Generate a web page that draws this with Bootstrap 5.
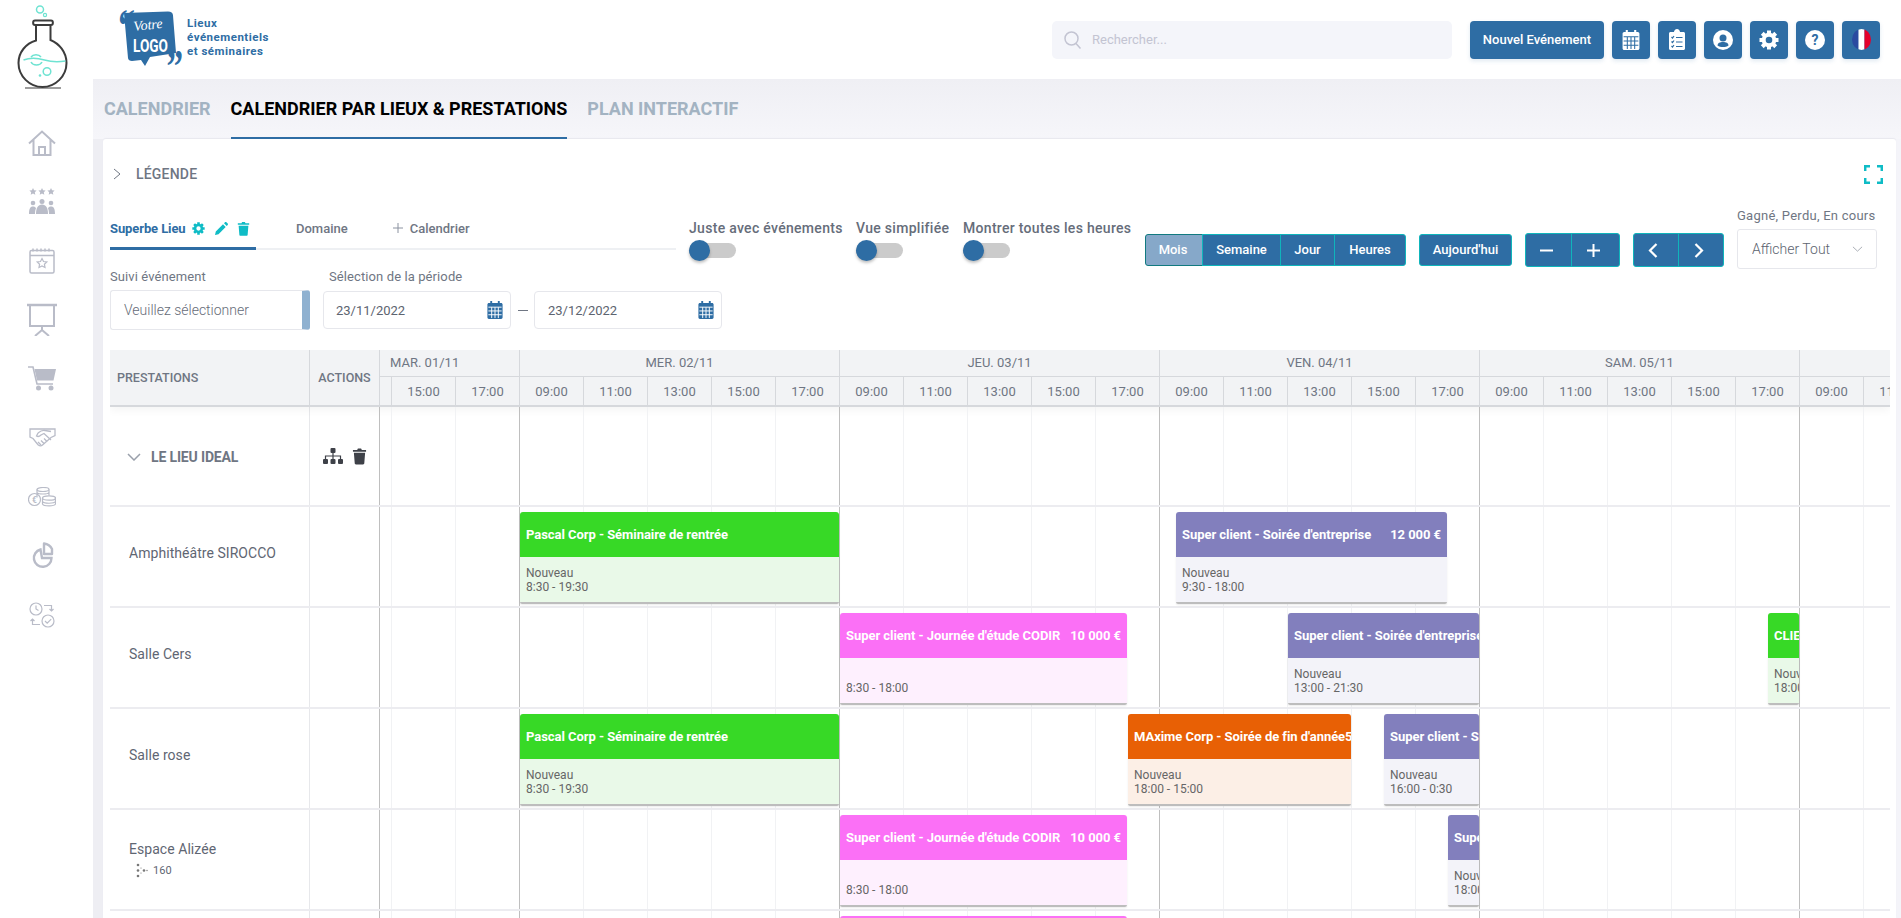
<!DOCTYPE html>
<html lang="fr">
<head>
  <meta charset="UTF-8" />
  <title>Calendrier par lieux</title>
  <link href="https://cdn.jsdelivr.net/npm/bootstrap@5.3.0/dist/css/bootstrap.min.css" rel="stylesheet"/>
  <style>
    html, body { height: 918px; overflow: hidden; }
    body { font-family: Roboto, "Liberation Sans", sans-serif; background: #f4f4f9; color: #6f7683; font-size: 13px; }
    .side-rail { flex: 0 0 93px; height: 918px; background: #fff; }
    .flask-box { height: 113px; padding-left: 2px; }
    .rail-item { height: 59px; width: 100%; color: #b9bcc8; padding-right: 9px; }
    .strip { flex: 0 0 10px; background: #eeeef3; }
    .cal-grid { stroke: var(--grid, #fff); }
    .cal-dark { --grid: #2e6da4; }

    .top-head { height: 79px; background: #fff; padding: 0 21px 0 7px; margin-left: -10px; position: relative; }
    .brand-text { color: #2e6da4; font-weight: 700; font-size: 11.5px; line-height: 14px; letter-spacing: .5px; margin: -6px 0 0 -9px; }
    .search-box { width: 400px; position: relative; margin-right: 18px; }
    .search-box input { height: 38px; background: #f4f5fa; border: 0; border-radius: 5px; padding-left: 40px; font-size: 13px; }
    .search-box input::placeholder { color: #c3c4d2; }
    .search-box svg { position: absolute; left: 12px; top: 10px; color: #c3c4d2; }
    .head-btn { height: 38px; background: #2e6da4; border: 0; border-radius: 4px; color: #fff; font-size: 13px; font-weight: 500; padding: 0; box-shadow: 0 2px 4px rgba(46,109,164,.15); }
    .head-btn.wide { width: 134px; }
    .head-btn.square { width: 38px; }
    .head-gap { gap: 8px; }

    .tab-bar { height: 60px; padding-left: 1px; background: linear-gradient(#efeff4, #f6f6fa); margin-left: -10px; gap: 20px; }
    .tab-link { font-size: 18px; font-weight: 700; color: #a3b3c2; height: 60px; line-height: 59px; text-transform: uppercase; padding: 0; margin: 0; }
    .tab-link:first-child { margin-left: 10px; }
    .tab-link.on { color: #000; border-bottom: 2px solid #2e6da4; }

    .sheet { background: #fff; margin-right: 5px; padding: 0 6px 0 7px; height: 779px; border-radius: 3px 3px 0 0; box-shadow: 0 -1px 1px #e8e8ee; overflow: hidden; }
    .legend-row { height: 70px; padding-right: 7px; }
    .legend-row span { font-size: 14px; font-weight: 500; margin-left: 15px; letter-spacing: .2px; }
    .legend-row .chev { margin-left: 3px; }
    .teal { color: #0fbcc6; }

    .tools-row { height: 60px; }
    .place-tabs { width: 566px; height: 30px; margin-top: 11px; margin-right: 13px; border-bottom: 2px solid #eef0f3; }
    .place-tab { height: 28px; line-height: 17px; padding: 0; font-size: 13px; font-weight: 500; color: #6f7683; }
    .place-tab.on { width: 146px; height: 30px; border-bottom: 3px solid #2e6da4; color: #2e6da4; font-weight: 700; letter-spacing: -.1px; white-space: nowrap; gap: 7px; }
    .switch-box { margin-top: 11px; }
    .sw-a { width: 167px; } .sw-b { width: 107px; } .sw-c { width: 182px; }
    .switch-box label { font-size: 14px; font-weight: 500; display: block; line-height: 17px; margin-bottom: 4px; letter-spacing: .3px; color: #666d7a; white-space: nowrap; }
    .switch-track { width: 47px; height: 15px; border-radius: 8px; background: #cbcbcb; position: relative; margin-top: 6px; }
    .switch-track::before { content: ""; position: absolute; left: 0; top: -3px; width: 21px; height: 21px; border-radius: 50%; background: #2e6da4; box-shadow: 0 2px 3px rgba(0,0,0,.25); }
    .plan-btn { background: #2e6da4; color: #fff; border: 1px solid #0fb5bb; font-size: 13px; font-weight: 500; height: 32px; padding: 0; box-shadow: none; border-radius: 3px; }
    .plan-btn:hover { background: #2e6da4; color: #fff; }
    .plan-btn.dim { background: #86a8c9; border-color: #117a80; }
    .tall .plan-btn { height: 34px; }
    .w-mois { width: 58px; padding-right: 2px; } .w-sem { width: 79px; } .w-jour { width: 55px; } .w-heures { width: 72px; }
    .w-today { width: 93px; margin: 25px 0 0 13px; }
    .w-minus { width: 47px; padding-right: 4px; } .w-plus { width: 49px; padding-right: 4px; }
    .w-prev { width: 46px; padding-right: 6px; } .w-next { width: 46px; padding-right: 4px; }
    .views-group { margin-top: 25px; }
    .step-group { margin: 24px 0 0 13px; }
    .status-box { width: 140px; margin-left: 13px; }
    .status-box div { font-size: 13px; line-height: 15px; letter-spacing: .25px; white-space: nowrap; margin-top: -1px; margin-bottom: 6px; }
    .status-box select { height: 40px; width: 140px; border: 1px solid #e6e7ec; border-radius: 3px; font-size: 14px; font-weight: 300; color: #5d6470; padding-left: 14px; background-size: 11px; background-position: right 13px center;
      background-image: url("data:image/svg+xml,%3csvg xmlns='http://www.w3.org/2000/svg' viewBox='0 0 12 7'%3e%3cpath fill='none' stroke='%23a0a4ad' d='M1 1l5 5 5-5'/%3e%3c/svg%3e"); }
    .field-label { font-size: 13px; line-height: 15px; margin-bottom: 6px; letter-spacing: .1px; }
    .track-select { width: 200px; height: 40px; border: 1px solid #e6e7ec; border-right: 8px solid #8fb1d0; border-radius: 3px; padding-left: 13px; font-size: 14px; font-weight: 300; line-height: 38px; color: #666c78; }
    .period-box { margin-left: 13px; }
    .period-box .field-label { margin: 1px 0 7px 6px; }
    .date-box { width: 188px; height: 38px; position: relative; }
    .date-box input { height: 38px; border: 1px solid #e6e7ec; border-radius: 4px; padding-left: 12px; font-size: 13px; color: #5d6470; }
    .date-box + .date-dash + .date-box input { padding-left: 13px; }
    .date-box svg { position: absolute; right: 8px; top: 10px; color: #2e6da4; }
    .date-dash { width: 10px; height: 1px; background: #6f7683; margin: 0 6.5px; }
    .fields-row { height: 82px; margin-top: -1px; }
    .suivi-label { margin-top: 1px; }

    .plan { width: 1780px; overflow: hidden; }
    .plan-head { height: 57px; background: #f2f3f5; border-bottom: 2px solid #d6d8dc; box-shadow: 0 4px 8px rgba(0,0,0,.04); position: relative; }
    .col-name { flex: 0 0 200px; border-right: 1px solid #e7e8eb; }
    .col-acts { flex: 0 0 70px; border-right: 1px solid #e7e8eb; }
    .plan-head .col-name, .plan-head .col-acts { border-right-color: #d6d8dc; font-weight: 500; font-size: 12.5px; line-height: 55px; }
    .plan-head .col-name { padding-left: 7px; }
    .plan-head .col-acts { text-align: center; }
    .head-track { flex: 0 0 auto; width: 1510px; overflow: hidden; }
    .day-line, .hour-line { display: flex; width: 1800px; }
    .day-line { height: 27px; border-bottom: 1px solid #d6d8dc; }
    .day-cell { flex: 0 0 320px; text-align: center; line-height: 26px; border-right: 1px solid #d6d8dc; font-size: 13px; }
    .day-cell.first { flex-basis: 140px; text-align: left; padding-left: 10px; }
    .hour-cell { flex: 0 0 64px; text-align: center; line-height: 30px; border-right: 1px solid #d6d8dc; font-size: 13px; height: 28px; }
    .hour-cell.stub { flex-basis: 12px; }

    .plan-row { height: 101px; border-bottom: 2px solid #ececf0; }
    .plan-row.group { height: 100px; }
    .plan-row .col-name { color: #5f6673; font-size: 14px; padding-left: 19px; padding-top: 36px; letter-spacing: .05px; }
    .plan-row.group .col-name { padding: 2px 0 0 17px; display: flex; align-items: center; font-weight: 700; font-size: 14px; letter-spacing: -.15px; color: #6f7683; gap: 10px; }
    .plan-row.group .col-acts { display: flex; align-items: center; justify-content: center; gap: 9px; color: #3e4148; padding-bottom: 1px; }
    .seat-line { font-size: 11px; line-height: 13px; margin: 3px 0 0 6px; display: flex; align-items: center; gap: 5px; }
    .plan-row.tight .col-name { padding-top: 29px; }
    .row-track { flex: 0 0 1511px; position: relative; border-left: 1px solid #bfbfbf;
      background-image: linear-gradient(to right, #bfbfbf 1px, transparent 1px), linear-gradient(to right, #f1f2f4 1px, transparent 1px);
      background-size: 320px 100%, 64px 100%;
      background-position: 139px 0, 11px 0; margin-left: -1px; }
    .slot { position: absolute; top: 5px; height: 92px; border-radius: 3px 3px 2px 2px; overflow: hidden; border-bottom: 2px solid #bdbdbd; box-shadow: 0 1px 2px rgba(0,0,0,.08); }
    .slot-top { height: 45px; display: flex; align-items: center; justify-content: space-between; padding: 0 6px; color: #fff; font-weight: 700; font-size: 13px; white-space: nowrap; letter-spacing: -.05px; }
    .slot-top span { flex: none; }
    .slot-body { height: 45px; padding: 9px 6px 0; font-size: 12px; line-height: 14px; color: #666; white-space: nowrap; }
    .tone-green .slot-top { background: #37d926; } .tone-green .slot-body { background: #e9f9e8; }
    .tone-violet .slot-top { background: #827fbd; } .tone-violet .slot-body { background: #f3f3f9; }
    .tone-pink .slot-top { background: #fb70f6; } .tone-pink .slot-body { background: #fef0fe; }
    .tone-orange .slot-top { background: #e86005; } .tone-orange .slot-body { background: #fcefe6; }
    .logo-box { margin: 3px 0 0 16px; overflow: visible; }
    .tab-gear { margin: 2px 0 0 -1px; }
    .tab-pen { margin: 2px 0 0 3px; }
    .tab-bin { margin: 1px 0 0 2px; }
    .tab-domain { margin-left: 40px; }
    .tab-add { margin-left: 45px; }
    .tab-add svg { margin: 3px 7px 0 0; }
  </style>
</head>
<body class="d-flex">
  <svg class="d-none" xmlns="http://www.w3.org/2000/svg">
    <symbol id="i-gear" viewBox="0 0 20 20">
      <g fill="currentColor">
        <path d="M8 .5h4v4H8zM8 15.500h4v4H8z"/>
        <path d="M8 .5h4v4H8zM8 15.500h4v4H8z" transform="rotate(45 10 10)"/>
        <path d="M8 .5h4v4H8zM8 15.500h4v4H8z" transform="rotate(90 10 10)"/>
        <path d="M8 .5h4v4H8zM8 15.500h4v4H8z" transform="rotate(135 10 10)"/>
      </g>
      <circle cx="10" cy="10" r="5.300" fill="none" stroke="currentColor" stroke-width="4"/>
    </symbol>
    <symbol id="i-trash" viewBox="0 0 16 18">
      <path fill="currentColor" d="M1 2.500h4.500L6.300 1h3.400l.8 1.500H15v2H1zM2 5.500h12l-.9 11.200c0 .7-.6 1.300-1.300 1.300H4.200c-.7 0-1.300-.6-1.300-1.300z"/>
    </symbol>
    <symbol id="i-cal" viewBox="0 0 16 19">
      <path fill="currentColor" d="M3 0h2v3H3zM11 0h2v3h-2zM1.500 2h13c.8 0 1.500.7 1.500 1.500v14c0 .8-.7 1.500-1.500 1.500h-13C.7 19 0 18.300 0 17.500v-14C0 2.700.7 2 1.500 2z"/>
      <path class="cal-grid" stroke-width="1" fill="none" d="M1 6.500h14M1 10.500h14M1 14.500h14M4.500 6.500V18M8 6.500V18M11.500 6.500V18"/>
    </symbol>
  </svg>

  <aside class="side-rail d-flex flex-column align-items-center">
    <div class="flask-box">
      <svg width="75" height="100" viewBox="0 0 75 100" fill="none">
        <circle cx="30" cy="9.500" r="3.500" stroke="#6fe3d2" stroke-width="1.500"/>
        <circle cx="35" cy="15" r="1.600" stroke="#6fe3d2" stroke-width="1.200"/>
        <path stroke="#3c3c3c" stroke-width="2" d="M25 20.500h16c2.500 0 2.500 4.500 0 4.500H25c-2.500 0-2.500-4.500 0-4.500zM26 25v15.500C16 43.500 8.500 52 8.500 63c0 13 11 24 24 24s24-11 24-24c0-11-7.500-19.500-16-23V25"/>
        <path stroke="#3c3c3c" stroke-width="1.200" d="M15 88h36"/>
        <path stroke="#6fe3d2" stroke-width="1.500" d="M13.500 60c8-3 14-2 21 0s14 2 21 1M21 57c2-3 8-3 10 0M21 62c2 4 9 4 11 0"/>
        <circle cx="37" cy="71.500" r="3.800" stroke="#6fe3d2" stroke-width="1.500"/>
        <circle cx="30" cy="75.500" r="1.300" fill="#6fe3d2"/>
      </svg>
    </div>
    <div class="rail-item d-flex align-items-center justify-content-center">
      <svg width="28" height="26" viewBox="0 0 28 26" fill="none" stroke="currentColor" stroke-width="2"><path d="M1 13.500 14 1.500l13 12M5.500 10v15h17V10M11 25v-8h6v8"/></svg>
    </div>
    <div class="rail-item d-flex align-items-center justify-content-center">
      <svg width="26" height="27" viewBox="0 0 26 27" fill="currentColor">
        <path d="M4 0l1.100 2.300 2.500.3-1.800 1.700.5 2.500L4 5.600 1.700 6.800l.5-2.500L.4 2.600l2.500-.3z"/>
        <path d="M13 0l1.100 2.300 2.500.3-1.800 1.700.5 2.500L13 5.600l-2.300 1.200.5-2.500-1.800-1.700 2.500-.3zM22 0l1.100 2.300 2.500.3-1.800 1.700.5 2.500L22 5.600l-2.300 1.200.5-2.500-1.800-1.700 2.500-.3z"/>
        <circle cx="4" cy="15" r="2.300"/><circle cx="13" cy="13.500" r="2.500"/><circle cx="22" cy="15" r="2.300"/>
        <path d="M0 26c0-5 1-7.500 4-7.500 1.500 0 2.500.7 3 1.700-.7 1.500-1 3.500-1 5.800zM7 26c0-6 2-9.500 6-9.500s6 3.500 6 9.500zM20 26c0-2.300-.3-4.300-1-5.800.5-1 1.500-1.700 3-1.700 3 0 4 2.500 4 7.500z"/>
      </svg>
    </div>
    <div class="rail-item d-flex align-items-center justify-content-center">
      <svg width="26" height="26" viewBox="0 0 26 26" fill="none" stroke="currentColor" stroke-width="1.500"><rect x="1" y="2.500" width="24" height="22.500" rx="1.500"/><path d="M1 7.500h24M4 .5v3M8 .5v3M12 .5v3M16 .5v3M20 .5v3"/><path stroke-width="1.200" d="M13 10.500l1.500 3 3.300.4-2.400 2.300.6 3.300-3-1.600-3 1.600.6-3.300-2.400-2.300 3.300-.4z"/></svg>
    </div>
    <div class="rail-item d-flex align-items-center justify-content-center">
      <svg width="30" height="33" viewBox="0 0 30 33" fill="none" stroke="currentColor" stroke-width="2"><path stroke-width="2.500" d="M0 2h30"/><path d="M3 3v20h24V3M15 23v4M15 27l-7 6M15 27l7 6"/></svg>
    </div>
    <div class="rail-item d-flex align-items-center justify-content-center">
      <svg width="28" height="25" viewBox="0 0 28 25" fill="currentColor"><path fill="none" stroke="currentColor" stroke-width="1.600" d="M0 1h5l4 17h16"/><path d="M6.500 3H28l-2.500 11.500H9z"/><circle cx="10.500" cy="22" r="2.500"/><circle cx="23" cy="22" r="2.500"/></svg>
    </div>
    <div class="rail-item d-flex align-items-center justify-content-center">
      <svg width="27" height="19" viewBox="0 0 27 19" fill="none" stroke="currentColor" stroke-width="1.300"><path d="M1 1h25v6.500l-4 2-8.500 7.500c-1.500 1.300-3 1-4.500-.3L4 10.500l-3-1.500z"/><path d="M9 5c3-2.500 5-3 7-2.500l6 1M9 5l-1.500 3c1.500 1 3 .5 4.500-1l3-1.500 7 6.500M12 17l-3-3M15 15.500l-3-3M18 13.500l-3-3"/></svg>
    </div>
    <div class="rail-item d-flex align-items-center justify-content-center">
      <svg width="28" height="20" viewBox="0 0 28 20" fill="none" stroke="currentColor" stroke-width="1.200"><circle cx="6.500" cy="12.500" r="6"/><text x="6.500" y="15.500" font-size="8.500" font-weight="700" fill="currentColor" stroke="none" text-anchor="middle" font-family="Roboto, sans-serif">€</text><ellipse cx="15" cy="2.500" rx="6" ry="2"/><path d="M9 2.500v8M21 2.500v6M9 5.500c1 2 11 2 12 0"/><ellipse cx="21" cy="11" rx="6.500" ry="2.200"/><path d="M14.500 11v6c1 2.500 12 2.500 13 0v-6M14.500 14.500c1 2.300 12 2.300 13 0"/></svg>
    </div>
    <div class="rail-item d-flex align-items-center justify-content-center">
      <svg width="23" height="27" viewBox="0 0 23 27" fill="none" stroke="currentColor" stroke-width="2.400"><path d="M9.500 7.500a8.800 8.800 0 1 0 11 8.500H11z"/><path stroke-linejoin="round" d="M13 1.500c3.500.5 6.500 2.500 8 5.500v5h-8z"/></svg>
    </div>
    <div class="rail-item d-flex align-items-center justify-content-center">
      <svg width="26" height="26" viewBox="0 0 26 26" fill="none" stroke="currentColor" stroke-width="1.200"><circle cx="7" cy="7" r="6"/><path d="M7 3.500V7l2.500 1.500"/><circle cx="19" cy="19" r="6"/><path d="M16 19l2.200 2.200 4-4M15 3.500h7.500v5.500M20.500 7l2 2 2-2M11 22.500H3.500V17M5.500 19l-2-2-2 2"/></svg>
    </div>
  </aside>
  <div class="strip"></div>

  <main class="flex-grow-1" style="min-width:0">
    <header class="top-head d-flex align-items-center">
      <svg class="logo-box" width="80" height="72" viewBox="0 0 80 72">
        <path fill="#2e6da4" d="M8 8 52 6.500c3 0 5 1.500 5 4L60 48 34 52l-5 9-4-6-9 1c-2 0-4-1-4-3z"/>
        <text x="3" y="36" font-size="46" font-weight="700" fill="#2e6da4" font-family="Liberation Serif, serif" transform="scale(.72 1)">“</text>
        <text x="70" y="77" font-size="46" font-weight="700" fill="#2e6da4" font-family="Liberation Serif, serif" transform="scale(.72 1)">”</text>
        <text x="18" y="26" font-size="14" font-style="italic" fill="#fff" font-family="Liberation Serif, serif" transform="rotate(-6 18 26)">Votre</text>
        <text x="17" y="47" font-size="19" font-weight="700" fill="#fff" font-family="Roboto, sans-serif" textLength="35" lengthAdjust="spacingAndGlyphs">LOGO</text>
      </svg>
      <div class="brand-text">Lieux<br>événementiels<br>et séminaires</div>
      <div class="search-box ms-auto">
        <svg width="18" height="18" viewBox="0 0 18 18" fill="none" stroke="currentColor" stroke-width="1.500"><circle cx="7.500" cy="7.500" r="6.500"/><path d="M12 12.500l4.500 5"/></svg>
        <input class="form-control" placeholder="Rechercher...">
      </div>
      <div class="d-flex head-gap">
        <button class="btn head-btn wide">Nouvel Evénement</button>
        <button class="btn head-btn square cal-dark"><svg width="18" height="20" color="#fff"><use href="#i-cal"/></svg></button>
        <button class="btn head-btn square"><svg width="16" height="21" viewBox="0 0 16 21"><path fill="#fff" d="M1.500 3H5c0-1.500 1.300-3 3-3s3 1.500 3 3h3.500c.8 0 1.500.7 1.500 1.500v15c0 .8-.7 1.500-1.500 1.500h-13C.7 21 0 20.300 0 19.500v-15C0 3.700.7 3 1.500 3z"/><path stroke="#2e6da4" stroke-width="1.200" fill="none" d="M2.500 8l1 1 1.500-2M2.500 12.500l1 1 1.500-2M2.500 17l1 1 1.500-2M7 8.500h6.500M7 13h6.500M7 17.500h6.500"/></svg></button>
        <button class="btn head-btn square"><svg width="20" height="20" viewBox="0 0 20 20"><circle cx="10" cy="10" r="10" fill="#fff"/><circle cx="10" cy="8" r="3.500" fill="#2e6da4"/><path fill="#2e6da4" d="M4.500 15.500c0-2.500 2.500-3.500 5.500-3.500s5.500 1 5.500 3.500c-1.500 1-3.500 1.500-5.500 1.500s-4-.5-5.500-1.500z"/></svg></button>
        <button class="btn head-btn square"><svg width="20" height="20" color="#fff"><use href="#i-gear"/></svg></button>
        <button class="btn head-btn square"><svg width="20" height="20" viewBox="0 0 20 20"><circle cx="10" cy="10" r="10" fill="#fff"/><text x="10" y="15" text-anchor="middle" font-size="14" font-weight="700" fill="#2e6da4" font-family="Roboto, sans-serif">?</text></svg></button>
        <button class="btn head-btn square"><svg width="19" height="21" viewBox="0 0 19 21"><defs><clipPath id="flagclip"><ellipse cx="9.500" cy="10.500" rx="9.500" ry="10.500"/></clipPath></defs><g clip-path="url(#flagclip)"><rect width="6.500" height="21" fill="#2a4aa0"/><rect x="6.500" width="6" height="21" fill="#fff"/><rect x="12.500" width="6.500" height="21" fill="#e4002b"/></g></svg></button>
      </div>
    </header>

    <nav class="nav tab-bar">
      <a class="nav-link tab-link">Calendrier</a>
      <a class="nav-link tab-link on">Calendrier par lieux &amp; prestations</a>
      <a class="nav-link tab-link">Plan interactif</a>
    </nav>

    <section class="sheet">
      <div class="legend-row d-flex align-items-center">
        <svg class="chev" width="8" height="12" viewBox="0 0 8 12" fill="none" stroke="#6f7683" stroke-width="1"><path d="M1 1l6 5-6 5"/></svg>
        <span>LÉGENDE</span>
        <svg class="ms-auto teal" width="19" height="19" viewBox="0 0 19 19" fill="none" stroke="currentColor" stroke-width="2.500"><path d="M1.200 6V1.200H6M13 1.200h4.800V6M1.200 13v4.800H6M13 17.800h4.800V13"/></svg>
      </div>

      <div class="tools-row d-flex align-items-start">
        <div class="place-tabs d-flex align-items-start">
          <div class="place-tab on d-flex">Superbe Lieu
            <svg class="teal tab-gear" width="13" height="13"><use href="#i-gear"/></svg>
            <svg class="teal tab-pen" width="13" height="13" viewBox="0 0 13 13"><path fill="currentColor" d="M0 13l.8-3.500L8 2.300l2.700 2.700-7.200 7.200zM9 1.300 10 .3c.4-.4 1-.4 1.400 0l1.300 1.300c.4.400.4 1 0 1.400l-1 1z"/></svg>
            <svg class="teal tab-bin" width="13" height="15"><use href="#i-trash"/></svg>
          </div>
          <div class="place-tab tab-domain">Domaine</div>
          <div class="place-tab tab-add d-flex align-items-start">
            <svg width="10" height="10" viewBox="0 0 10 10" stroke="#8b92a0" stroke-width="1"><path d="M5 0v10M0 5h10"/></svg>Calendrier
          </div>
        </div>
        <div class="switch-box sw-a"><label>Juste avec événements</label><div class="switch-track"></div></div>
        <div class="switch-box sw-b"><label>Vue simplifiée</label><div class="switch-track"></div></div>
        <div class="switch-box sw-c"><label>Montrer toutes les heures</label><div class="switch-track"></div></div>
        <div class="btn-group views-group">
          <button class="btn plan-btn dim w-mois">Mois</button>
          <button class="btn plan-btn w-sem">Semaine</button>
          <button class="btn plan-btn w-jour">Jour</button>
          <button class="btn plan-btn w-heures">Heures</button>
        </div>
        <button class="btn plan-btn w-today">Aujourd'hui</button>
        <div class="btn-group tall step-group">
          <button class="btn plan-btn w-minus"><svg width="15" height="15" viewBox="0 0 15 15" stroke="#fff" stroke-width="2"><path d="M1 7.500h13"/></svg></button>
          <button class="btn plan-btn w-plus"><svg width="15" height="15" viewBox="0 0 15 15" stroke="#fff" stroke-width="2"><path d="M1 7.500h13M7.500 1v13"/></svg></button>
        </div>
        <div class="btn-group tall step-group">
          <button class="btn plan-btn w-prev"><svg width="10" height="15" viewBox="0 0 10 15" fill="none" stroke="#fff" stroke-width="2.200"><path d="M8.500 1 2 7.500 8.500 14"/></svg></button>
          <button class="btn plan-btn w-next"><svg width="10" height="15" viewBox="0 0 10 15" fill="none" stroke="#fff" stroke-width="2.200"><path d="M1.500 1 8 7.500 1.500 14"/></svg></button>
        </div>
        <div class="status-box">
          <div>Gagné, Perdu, En cours</div>
          <select class="form-select"><option>Afficher Tout</option></select>
        </div>
      </div>

      <div class="fields-row d-flex align-items-start">
        <div>
          <div class="field-label suivi-label">Suivi événement</div>
          <div class="track-select">Veuillez sélectionner</div>
        </div>
        <div class="period-box">
          <div class="field-label">Sélection de la période</div>
          <div class="d-flex align-items-center">
            <div class="date-box"><input class="form-control" value="23/11/2022"><svg width="16" height="18"><use href="#i-cal"/></svg></div>
            <div class="date-dash"></div>
            <div class="date-box"><input class="form-control" value="23/12/2022"><svg width="16" height="18"><use href="#i-cal"/></svg></div>
          </div>
        </div>
      </div>

      <div class="plan">
        <div class="plan-head d-flex">
          <div class="col-name">PRESTATIONS</div>
          <div class="col-acts">ACTIONS</div>
          <div class="head-track">
            <div class="day-line" id="dayLine"></div>
            <div class="hour-line" id="hourLine"></div>
          </div>
        </div>
        <div id="planRows"></div>
      </div>
    </section>
  </main>

  <script>
    const days = ['MAR. 01/11', 'MER. 02/11', 'JEU. 03/11', 'VEN. 04/11', 'SAM. 05/11', ''];
    const hours = ['09:00', '11:00', '13:00', '15:00', '17:00'];

    const dayLine = document.getElementById('dayLine');
    const hourLine = document.getElementById('hourLine');
    dayLine.innerHTML = days.map((d, i) => `<div class="day-cell ${i === 0 ? 'first' : ''}">${d}</div>`).join('');

    let hourHtml = '<div class="hour-cell stub"></div><div class="hour-cell">15:00</div><div class="hour-cell">17:00</div>';
    for (let i = 0; i < 4; i++) hourHtml += hours.map(h => `<div class="hour-cell">${h}</div>`).join('');
    hourHtml += '<div class="hour-cell">09:00</div><div class="hour-cell">11:00</div>';
    hourLine.innerHTML = hourHtml;

    const pascal = { tone: 'green', left: 140, width: 319, title: 'Pascal Corp - Séminaire de rentrée', amount: '', state: 'Nouveau', time: '8:30 - 19:30' };
    const codir = { tone: 'pink', left: 460, width: 287, title: "Super client - Journée d'étude CODIR", amount: '10 000 €', state: '', time: '8:30 - 18:00' };
    const soiree = "Super client - Soirée d'entreprise";

    const rows = [
      { name: 'Amphithéâtre SIROCCO', slots: [pascal,
        { tone: 'violet', left: 796, width: 271, title: soiree, amount: '12 000 €', state: 'Nouveau', time: '9:30 - 18:00' }] },
      { name: 'Salle Cers', slots: [codir,
        { tone: 'violet', left: 908, width: 191, title: soiree, amount: '12 000 €', state: 'Nouveau', time: '13:00 - 21:30' },
        { tone: 'green', left: 1388, width: 31, title: 'CLIENT', amount: '', state: 'Nouveau', time: '18:00 - 23:00' }] },
      { name: 'Salle rose', slots: [pascal,
        { tone: 'orange', left: 748, width: 223, title: "MAxime Corp - Soirée de fin d'année", amount: '5 000 €', state: 'Nouveau', time: '18:00 - 15:00' },
        { tone: 'violet', left: 1004, width: 95, title: soiree, amount: '12 000 €', state: 'Nouveau', time: '16:00 - 0:30' }] },
      { name: 'Espace Alizée', seats: 160, slots: [codir,
        { tone: 'violet', left: 1068, width: 31, title: soiree, amount: '', state: 'Nouveau', time: '18:00 - 23:00' }] },
      { name: '', slots: [codir] }
    ];

    function slotHtml(s) {
      return `<div class="slot tone-${s.tone}" style="left:${s.left}px;width:${s.width}px">
        <div class="slot-top"><span>${s.title}</span><span>${s.amount}</span></div>
        <div class="slot-body">${s.state || '&nbsp;'}<br>${s.time}</div>
      </div>`;
    }

    const seatIcon = `<svg width="13" height="15" viewBox="0 0 13 15" fill="#777"><circle cx="3" cy="2" r="1.300"/><circle cx="3" cy="7.500" r="1.300"/><circle cx="3" cy="13" r="1.300"/><circle cx="9" cy="7.500" r="1.300"/><circle cx="12" cy="7.500" r=".7"/><circle cx="6" cy="5" r=".6"/><circle cx="6" cy="10" r=".6"/></svg>`;

    let html = `<div class="plan-row group d-flex">
      <div class="col-name"><svg width="14" height="8" viewBox="0 0 14 8" fill="none" stroke="#9aa0ab" stroke-width="1.500"><path d="M1 1l6 6 6-6"/></svg>LE LIEU IDEAL</div>
      <div class="col-acts">
        <svg width="20" height="16" viewBox="0 0 20 16" fill="currentColor"><rect x="7.500" y="0" width="5" height="5" rx="1"/><rect x="0" y="11" width="5" height="5" rx="1"/><rect x="7.500" y="11" width="5" height="5" rx="1"/><rect x="15" y="11" width="5" height="5" rx="1"/><path fill="none" stroke="currentColor" stroke-width="1.200" d="M10 5v6M2.500 11V8h15v3"/></svg>
        <svg width="15" height="18"><use href="#i-trash"/></svg>
      </div>
      <div class="row-track"></div>
    </div>`;
    rows.forEach(r => {
      const seats = r.seats ? `<div class="seat-line">${seatIcon}${r.seats}</div>` : '';
      html += `<div class="plan-row d-flex ${r.seats ? 'tight' : ''}">
        <div class="col-name">${r.name}${seats}</div>
        <div class="col-acts"></div>
        <div class="row-track">${r.slots.map(slotHtml).join('')}</div>
      </div>`;
    });
    document.getElementById('planRows').innerHTML = html;
  </script>
</body>
</html>
